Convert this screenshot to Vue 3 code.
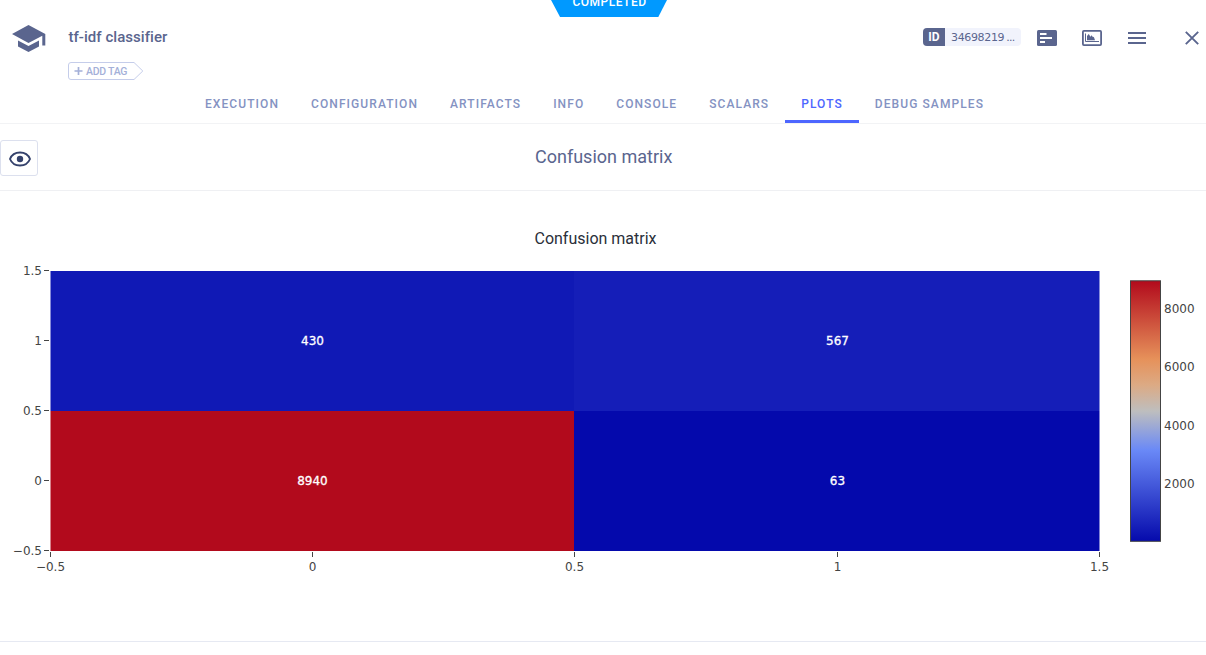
<script setup>
const tabs = ['EXECUTION', 'CONFIGURATION', 'ARTIFACTS', 'INFO', 'CONSOLE', 'SCALARS', 'PLOTS', 'DEBUG SAMPLES']
const activeTab = 'PLOTS'

const cells = [
  { value: 430, x: 50.5, y: 271, w: 523.5, h: 140, fill: '#1019b5', tx: 312.5, ty: 345 },
  { value: 567, x: 574, y: 271, w: 525.5, h: 140, fill: '#151eb8', tx: 837.5, ty: 345 },
  { value: 8940, x: 50.5, y: 411, w: 523.5, h: 140, fill: '#b20a1c', tx: 312.5, ty: 485 },
  { value: 63, x: 574, y: 411, w: 525.5, h: 140, fill: '#0409ac', tx: 837.5, ty: 485 },
]
const yTicks = [
  { label: '1.5', y: 270.5 },
  { label: '1', y: 340.5 },
  { label: '0.5', y: 410.5 },
  { label: '0', y: 480.5 },
  { label: '−0.5', y: 550.5 },
]
const xTicks = [
  { label: '−0.5', x: 50.5 },
  { label: '0', x: 312.5 },
  { label: '0.5', x: 574.5 },
  { label: '1', x: 837.5 },
  { label: '1.5', x: 1099.5 },
]
const scale = [
  { label: '8000', y: 313 },
  { label: '6000', y: 371 },
  { label: '4000', y: 430 },
  { label: '2000', y: 488 },
]
const top = 191
</script>

<template>
  <div class="page">
    <div class="status"><span>COMPLETED</span></div>
    <header class="header">
      <svg class="cap" width="34" height="28" viewBox="0 0 34 28">
        <path d="M16.5 0 L33.3 9 V20.5 H30.3 V10.7 L16.5 18 L0 9 Z M6 15.5 L16.5 21 L27 15.5 V21.5 L16.5 27 L6 21.5 Z" fill="#5a658e" />
      </svg>
      <div class="title-block">
        <h1>tf-idf classifier</h1>
        <div class="tag">
          <svg width="76" height="18" viewBox="0 0 76 18">
            <path d="M3 .5 H66 L74.8 9 L66 17.5 H3 Q.5 17.5 .5 15 V3 Q.5 .5 3 .5 Z" fill="#fff" stroke="#c5cdea" />
            <path d="M6.5 9 H14.5 M10.5 5 V13" stroke="#a4b0d8" stroke-width="1.7" />
          </svg>
          <span>ADD TAG</span>
        </div>
      </div>
      <div class="actions">
        <div class="id-chip"><b>ID</b><span>34698219<i>...</i></span></div>
        <svg class="details" width="20" height="16" viewBox="0 0 20 16">
          <rect width="20" height="16" rx="1.5" fill="#5a658e" />
          <path d="M3 4 H9.5 M3 8 H15 M3 12 H8" stroke="#fff" stroke-width="1.8" />
        </svg>
        <svg class="image" width="20" height="16" viewBox="0 0 20 16">
          <rect x=".9" y=".9" width="18.2" height="14.2" rx="1" fill="#fff" stroke="#5a658e" stroke-width="1.8" />
          <path d="M3.5 3.5 V11.5 H17" fill="none" stroke="#5a658e" />
          <path d="M5 10.3 V6 L6.8 4 L8.4 6.8 L9.6 5.2 L11 7.3 L11.8 6.8 L13 10.3 Z" fill="#5a658e" />
        </svg>
        <svg class="menu" width="18" height="12" viewBox="0 0 18 12">
          <path d="M0 1 H18 M0 6 H18 M0 11 H18" stroke="#5a658e" stroke-width="2" />
        </svg>
        <svg class="close" width="14" height="14" viewBox="0 0 14 14">
          <path d="M.8 .8 L13.2 13.2 M13.2 .8 L.8 13.2" stroke="#5a658e" stroke-width="1.9" />
        </svg>
      </div>
    </header>
    <nav class="tabs">
      <a v-for="t in tabs" :key="t" :class="{ active: t === activeTab }">{{ t }}</a>
    </nav>
    <section class="group">
      <button class="eye">
        <svg width="22" height="16" viewBox="0 0 22 16">
          <path d="M1 8 C4.5 -.7 17.5 -.7 21 8 C17.5 16.7 4.5 16.7 1 8 Z" fill="none" stroke="#34416b" stroke-width="1.9" />
          <circle cx="11" cy="8" r="3.2" fill="#34416b" />
        </svg>
      </button>
      <h2>Confusion matrix</h2>
    </section>
    <section class="plot">
      <svg width="1206" height="450" :viewBox="`0 ${top} 1206 450`">
        <defs>
          <linearGradient id="heat" x1="0" y1="1" x2="0" y2="0">
            <stop offset="0" stop-color="rgb(5,10,172)" />
            <stop offset=".35" stop-color="rgb(106,137,247)" />
            <stop offset=".5" stop-color="rgb(190,190,190)" />
            <stop offset=".6" stop-color="rgb(220,170,132)" />
            <stop offset=".7" stop-color="rgb(230,145,90)" />
            <stop offset="1" stop-color="rgb(178,10,28)" />
          </linearGradient>
        </defs>
        <text class="plot-title" x="595.5" y="244" text-anchor="middle">Confusion matrix</text>
        <g v-for="c in cells" :key="c.value">
          <rect :x="c.x" :y="c.y" :width="c.w" :height="c.h" :fill="c.fill" />
          <text class="value" :x="c.tx" :y="c.ty" text-anchor="middle">{{ c.value }}</text>
        </g>
        <g v-for="t in yTicks" :key="'y' + t.label">
          <path :d="`M44 ${t.y} H49`" stroke="#444" />
          <text class="tick" x="42" :y="t.y + 4.5" text-anchor="end">{{ t.label }}</text>
        </g>
        <g v-for="t in xTicks" :key="'x' + t.label">
          <path :d="`M${t.x} 552 V557`" stroke="#444" />
          <text class="tick" :x="t.x" y="571" text-anchor="middle">{{ t.label }}</text>
        </g>
        <rect x="1130.5" y="280.8" width="30" height="260.5" fill="url(#heat)" stroke="#444" />
        <text v-for="s in scale" :key="s.label" class="tick" x="1164" :y="s.y">{{ s.label }}</text>
      </svg>
    </section>
  </div>
</template>

<style>
body { margin: 0; background: #fff; }
</style>

<style scoped>
.page { position: relative; width: 1206px; height: 655px; overflow: hidden; background: #fff; font-family: Roboto, sans-serif; color: #5a658e; }
.status { position: absolute; top: 0; left: 551px; width: 116px; height: 17px; background: #0099ff; clip-path: polygon(0 0, 100% 0, 92.5% 100%, 7.8% 100%); text-align: center; }
.status span { display: block; margin: -6px 0 0 1px; color: #fff; font-size: 12px; line-height: 16px; font-weight: 500; letter-spacing: .5px; }
.header { display: flex; height: 87px; align-items: flex-start; }
.cap { margin: 25px 0 0 12px; }
.title-block { margin: 28px 0 0 22.5px; }
h1 { margin: 0; font-size: 15px; line-height: 18px; font-weight: 500; letter-spacing: .04px; }
.tag { position: relative; display: flex; width: 76px; height: 18px; margin: 16px 0 0 -.5px; }
.tag span { position: absolute; left: 18px; top: 1px; font-size: 10.5px; line-height: 18px; font-weight: 500; letter-spacing: -.25px; color: #a4b0d8; white-space: nowrap; }
.actions { display: flex; margin-left: auto; padding-right: 7px; align-items: flex-start; }
.id-chip { display: flex; width: 98px; height: 18px; margin: 28px 16px 0 0; border-radius: 4px; overflow: hidden; background: #f1f3fc; font-size: 11px; line-height: 19px; }
.id-chip b { width: 22px; background: #5a658e; color: #fff; text-align: center; font-weight: 700; font-size: 12px; line-height: 18px; }
.id-chip span { padding-left: 6px; font-family: "DejaVu Sans", sans-serif; letter-spacing: -.35px; }
.id-chip i { font-style: normal; margin-left: 2px; letter-spacing: -.7px; }
.details { margin: 30px 25px 0 0; }
.image { margin: 30px 26px 0 0; }
.menu { margin: 32px 39px 0 0; }
.close { margin-top: 31px; }
.tabs { display: flex; height: 36px; padding-left: 189px; border-bottom: 1px solid #f2f3f5; }
.tabs a { box-sizing: border-box; height: 36px; padding: 0 16px; font-size: 12px; line-height: 35px; font-weight: 500; letter-spacing: 1.08px; color: #8492c2; white-space: nowrap; border-bottom: 3px solid transparent; }
.tabs a.active { color: #4d66ff; border-color: #4d66ff; }
.group { display: flex; height: 66px; border-bottom: 1px solid #eff0f3; }
.eye { display: flex; align-items: center; justify-content: center; box-sizing: border-box; width: 38px; height: 36px; margin-top: 16px; padding: 2px 0 0 1px; border: 1px solid #dce0ee; border-radius: 3px; background: #fff; }
h2 { margin: 22px 0 0 497px; font-size: 18px; line-height: 22px; font-weight: 400; }
.plot { height: 450px; border-bottom: 1px solid #e6e9f2; }
.plot svg { display: block; }
.plot-title { font: 16px Roboto, sans-serif; fill: #2a2f3a; }
.tick { font: 12px "DejaVu Sans", sans-serif; fill: #444; }
.value { font: 12px "DejaVu Sans", sans-serif; fill: #fff; stroke: #fff; stroke-width: .3px; }
</style>
